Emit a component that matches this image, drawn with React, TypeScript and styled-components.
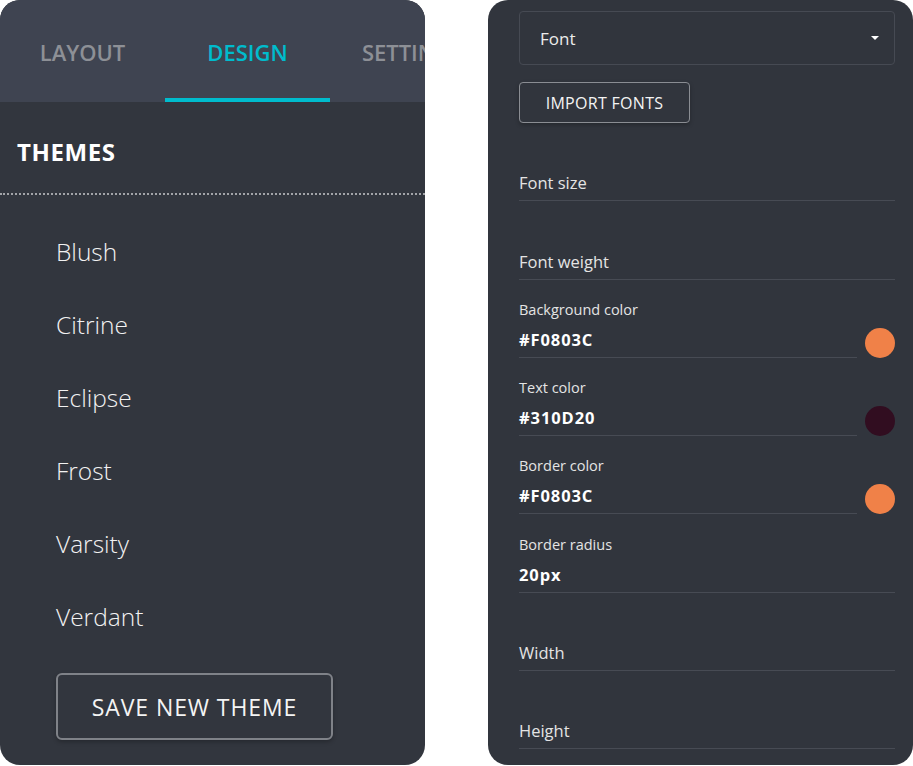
import React from "react";
import styled, { createGlobalStyle } from "styled-components";

const GlobalStyle = createGlobalStyle`
  html, body {
    margin: 0;
    padding: 0;
    background: #ffffff;
  }
  * {
    box-sizing: border-box;
  }
  body {
    font-family: "Open Sans", "Liberation Sans", sans-serif;
  }
`;

const Page = styled.div`
  display: flex;
  gap: 63px;
  width: 913px;
  height: 766px;
`;

const LeftPanel = styled.div`
  width: 425px;
  height: 765px;
  background: #32363e;
  border-radius: 20px;
  overflow: hidden;
  display: flex;
  flex-direction: column;
`;

const TabBar = styled.div`
  display: flex;
  height: 102px;
  background: #3f4451;
  overflow: hidden;
`;

const Tab = styled.div<{ $active?: boolean }>`
  flex: 0 0 165px;
  display: flex;
  align-items: center;
  justify-content: center;
  padding-top: 6px;
  font-size: 22px;
  font-weight: 600;
  white-space: nowrap;
  color: ${(p) => (p.$active ? "#00bccd" : "#8d9096")};
  border-bottom: 4px solid ${(p) => (p.$active ? "#00bccd" : "transparent")};
`;

const SectionHeader = styled.div`
  height: 93px;
  display: flex;
  align-items: center;
  padding: 8px 17px 0;
  font-size: 24px;
  font-weight: 700;
  letter-spacing: 0.6px;
  color: #ffffff;
  border-bottom: 2px dotted rgba(255, 255, 255, 0.55);
`;

const ThemeList = styled.ul`
  list-style: none;
  margin: 0;
  padding: 20px 0 0 56px;
`;

const ThemeItem = styled.li`
  height: 73px;
  display: flex;
  align-items: center;
  font-size: 24.5px;
  font-weight: 300;
  color: #f2f2f2;
`;

const OutlineButton = styled.button<{ $size?: "lg" | "sm" }>`
  display: flex;
  align-items: center;
  justify-content: center;
  background: transparent;
  color: #f4f4f4;
  font-family: "Open Sans", "Liberation Sans", sans-serif;
  cursor: pointer;
  box-shadow: 0 2px 4px rgba(0, 0, 0, 0.25);
  ${(p) =>
    p.$size === "lg"
      ? `
    width: 277px;
    height: 67px;
    margin: 20px 0 0 56px;
    font-size: 23px;
    letter-spacing: 0.9px;
    border: 2px solid #7f8288;
    border-radius: 6px;
  `
      : `
    width: 171px;
    height: 41px;
    margin-top: 17px;
    font-size: 16px;
    letter-spacing: 0.3px;
    border: 1.5px solid #8a8d93;
    border-radius: 4px;
  `}
`;

const RightPanel = styled.div`
  width: 425px;
  height: 765px;
  background: #31353d;
  border-radius: 20px;
  overflow: hidden;
  padding: 11px 18px 0 31px;
  display: flex;
  flex-direction: column;
`;

const Select = styled.div`
  height: 54px;
  display: flex;
  align-items: center;
  justify-content: space-between;
  padding: 0 15px 0 20px;
  border: 1px solid #464a53;
  border-radius: 4px;
  font-size: 17px;
  color: #ececec;
`;

const Caret = styled.span`
  width: 0;
  height: 0;
  border-left: 4px solid transparent;
  border-right: 4px solid transparent;
  border-top: 4px solid #ffffff;
`;

const FieldRow = styled.div`
  display: flex;
  align-items: flex-end;
  gap: 8px;
`;

const Field = styled.div`
  flex: 1;
  height: 78.3px;
  display: flex;
  flex-direction: column;
  justify-content: flex-end;
  padding-bottom: 6px;
  border-bottom: 1px solid #474b54;
`;

const FieldLabel = styled.div<{ $small?: boolean }>`
  font-size: ${(p) => (p.$small ? "14.5px" : "16.5px")};
  line-height: ${(p) => (p.$small ? "20px" : "22px")};
  color: #e4e4e4;
  margin-bottom: ${(p) => (p.$small ? "9px" : "0")};
`;

const FieldValue = styled.div`
  font-size: 16.5px;
  line-height: 22px;
  font-weight: 700;
  color: #ffffff;
  letter-spacing: 0.9px;
`;

const Swatch = styled.span<{ $color: string }>`
  flex: 0 0 30px;
  height: 30px;
  border-radius: 50%;
  background: ${(p) => p.$color};
  margin-bottom: 0;
`;

const themes = ["Blush", "Citrine", "Eclipse", "Frost", "Varsity", "Verdant"];

type FieldDef = { label: string; value?: string; color?: string };

const fields: FieldDef[] = [
  { label: "Font size" },
  { label: "Font weight" },
  { label: "Background color", value: "#F0803C", color: "#f08148" },
  { label: "Text color", value: "#310D20", color: "#310d20" },
  { label: "Border color", value: "#F0803C", color: "#f08148" },
  { label: "Border radius", value: "20px" },
  { label: "Width" },
  { label: "Height" },
];

const renderField = (f: FieldDef) => (
  <FieldRow key={f.label}>
    <Field>
      <FieldLabel $small={!!f.value}>{f.label}</FieldLabel>
      {f.value && <FieldValue>{f.value}</FieldValue>}
    </Field>
    {f.color && <Swatch $color={f.color} />}
  </FieldRow>
);

export default function App() {
  return (
    <>
      <GlobalStyle />
      <Page>
        <LeftPanel>
          <TabBar>
            <Tab>LAYOUT</Tab>
            <Tab $active>DESIGN</Tab>
            <Tab>SETTINGS</Tab>
          </TabBar>
          <SectionHeader>THEMES</SectionHeader>
          <ThemeList>
            {themes.map((t) => (
              <ThemeItem key={t}>{t}</ThemeItem>
            ))}
          </ThemeList>
          <OutlineButton $size="lg">SAVE NEW THEME</OutlineButton>
        </LeftPanel>

        <RightPanel>
          <Select>
            <span>Font</span>
            <Caret />
          </Select>
          <OutlineButton $size="sm">IMPORT FONTS</OutlineButton>
          {fields.map(renderField)}
        </RightPanel>
      </Page>
    </>
  );
}
